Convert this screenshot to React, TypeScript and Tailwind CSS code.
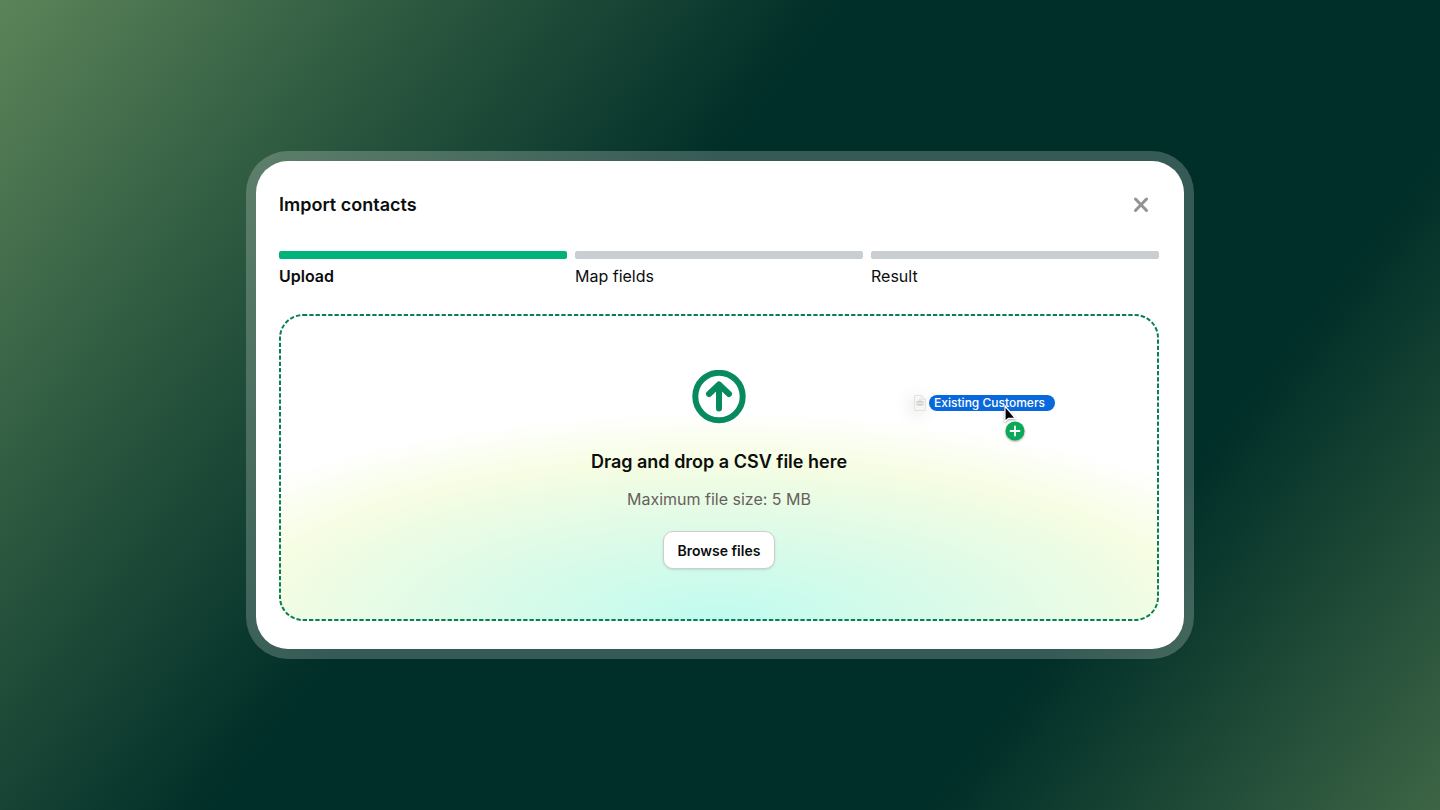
import React, { useState } from 'react';

const steps = ['Upload', 'Map fields', 'Result'];

const CloseIcon = () => (
  <svg width="16" height="16" viewBox="0 0 16 16" fill="none" stroke="currentColor" strokeWidth="3" strokeLinecap="round">
    <path d="M2.5 2l11 11.5M13.5 2l-11 11.5" />
  </svg>
);

const UploadIcon = () => (
  <svg width="54" height="54" viewBox="0 0 54 54" fill="none" stroke="currentColor" strokeWidth="6" strokeLinecap="round" strokeLinejoin="round">
    <circle cx="27" cy="26.5" r="23.7" />
    <path d="M27 38.5V15M17 24l10-9.5L37 24" />
  </svg>
);

const FileIcon = () => (
  <svg width="12" height="16" viewBox="0 0 12 16" fill="#f6f6f4" stroke="#dcdcda" strokeWidth="0.8" className="drop-shadow-[-3px_3px_8px_rgba(0,0,0,0.12)]">
    <path d="M1 .5h6.8l3.7 3.7V15a.5.5 0 0 1-.5.5H1a.5.5 0 0 1-.5-.5V1A.5.5 0 0 1 1 .5z" />
    <path d="M7.8.5v3.700h3.700" />
    <path d="M3 6.500h6v3.500H3zM5 6v4.500M7 6v4.500M6 4v2" stroke="#c4c4c2" fill="none" />
  </svg>
);

// Mouse pointer with the green "copy" badge
const DragCursor = () => (
  <svg width="26" height="38" viewBox="0 0 26 38" fill="none" className="drop-shadow-[0_1px_1px_rgba(0,0,0,0.35)]">
    <path d="M1 1v15.500l3.500-3.200h6.800z" fill="#000" stroke="#fff" strokeWidth="1.2" strokeLinejoin="round" />
    <circle cx="11" cy="26" r="9.5" fill="#0aa858" />
    <path d="M11 21.500v9M6.500 26h9" stroke="#fff" strokeWidth="1.8" strokeLinecap="round" />
  </svg>
);

// border-dashed draws its dashes too long, so the outline is stroked instead
const DashedOutline = () => (
  <svg aria-hidden="true" className="pointer-events-none absolute inset-0 h-full w-full" fill="none">
    <rect x="1" y="1" rx="23" className="h-[calc(100%-2px)] w-[calc(100%-2px)]" stroke="#078054" strokeWidth="2" strokeDasharray="4.3 2" />
  </svg>
);

const App: React.FC = () => {
  const [activeStep] = useState(0);

  return (
    <div className="min-h-screen flex items-center justify-center p-4 font-['Inter',sans-serif] text-[#0c0d0d] bg-[linear-gradient(128deg,#5c8459_0%,#2f5b41_19%,#002e28_41%,#002e28_75%,#3d6545_100%)]">
      <main className="w-full max-w-[948px] rounded-[42px] bg-white/21 p-[10px]">
        <div className="rounded-[32px] bg-white pl-[23px] pr-[25px] py-7">
          <header className="flex items-center justify-between">
            <h1 className="text-[18px] leading-7 font-semibold">Import contacts</h1>
            <button aria-label="Close" className="p-2 mr-0.5 text-[#949292]">
              <CloseIcon />
            </button>
          </header>

          <ol className="mt-[30px] grid grid-cols-3 gap-2">
            {steps.map((step, i) => (
              <li key={step} className={`text-[16px] leading-6 ${i === activeStep ? 'font-semibold' : ''}`}>
                <div className={`h-2 mb-[5px] rounded-xs ${i === activeStep ? 'bg-[#00b37a]' : 'bg-[#c9ced2]'}`}></div>
                {step}
              </li>
            ))}
          </ol>

          <section className="relative mt-[26px] flex flex-col items-center rounded-3xl pt-14 pb-[52px] bg-[radial-gradient(ellipse_70%_68%_at_50%_100%,#c0fbf0_0%,#e2fbe6_50%,#f6fde3_77%,#ffffff_100%)]">
            <DashedOutline />
            <span className="text-[#078b5e]">
              <UploadIcon />
            </span>
            <h2 className="mt-6 text-[18px] leading-7 font-semibold">Drag and drop a CSV file here</h2>
            <p className="mt-[11px] text-[16px] leading-6 text-[#67605d]">Maximum file size: 5 MB</p>
            <button className="mt-5 h-[38px] rounded-[10px] border border-[#d0cecd] bg-white px-[14px] text-[14px] font-semibold shadow-sm">
              Browse files
            </button>

            {/* File being dragged over the drop zone */}
            <div className="absolute right-[104px] top-[81px] flex items-center gap-[3px]">
              <FileIcon />
              <span className="h-4 rounded-full bg-[#0868dc] pl-[5px] pr-[10px] text-[12px] leading-4 font-medium text-white">Existing Customers</span>
              <span className="absolute left-[90px] top-[10px]">
                <DragCursor />
              </span>
            </div>
          </section>
        </div>
      </main>
    </div>
  );
};

export default App;
